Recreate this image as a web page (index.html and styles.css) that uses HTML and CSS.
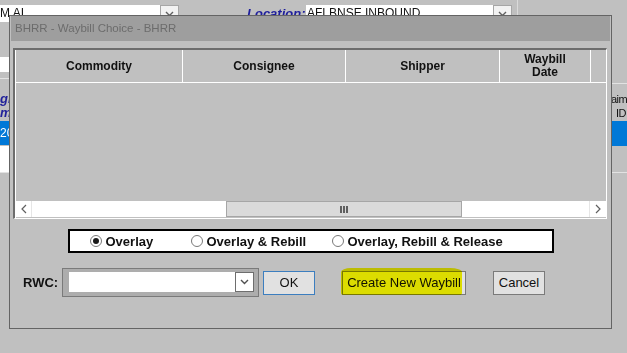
FILE: index.html
```html
<!DOCTYPE html>
<html lang="en">
<head>
    <meta charset="UTF-8">
    <title>Waybill Choice</title>
    <link rel="stylesheet" href="styles.css">
</head>
<body>
<div class="topbar">
    <div class="field field-cust">M AI</div>
    <div class="drop"><svg width="9" height="6" viewBox="0 0 9 6"><path d="M1 1l3.5 3.5L8 1" fill="none" stroke="#606060" stroke-width="1.4"/></svg></div>
    <div class="loc-label">Location:</div>
    <div class="field field-loc">AFLBNSE INBOUND</div>
    <div class="drop"><svg width="9" height="6" viewBox="0 0 9 6"><path d="M1 1l3.5 3.5L8 1" fill="none" stroke="#606060" stroke-width="1.4"/></svg></div>
    <div class="topbar-edge"></div>
</div>
<div class="sides">
    <div class="side side-left">
        <div class="side-input"></div>
        <div class="side-line first"></div>
        <div class="side-label">gnee<br>mit</div>
        <div class="side-row sel">20</div>
        <div class="side-row blank"></div>
        <div class="side-line"></div>
    </div>
    <div class="side side-right">
        <div class="side-line"></div>
        <div class="side-text"><span class="t1">aim</span><span class="t2">ID</span></div>
        <div class="side-row sel"></div>
        <div class="side-line last"></div>
    </div>
</div>

<div class="dialog">
    <div class="title">BHRR - Waybill Choice - BHRR</div>
    <div class="grid">
        <div class="grid-inner">
            <div class="grid-head">
                <div class="col c1">Commodity</div>
                <div class="col c2">Consignee</div>
                <div class="col c3">Shipper</div>
                <div class="col c4">Waybill<br>Date</div>
                <div class="col c5"></div>
            </div>
            <div class="grid-body"></div>
            <div class="hscroll">
                <div class="arrow arrow-l"><svg width="6" height="10" viewBox="0 0 6 10"><path d="M5 1L1 5l4 4" fill="none" stroke="#606060" stroke-width="1.2"/></svg></div>
                <div class="track track-l"></div>
                <div class="thumb"><span></span><span></span><span></span></div>
                <div class="track"></div>
                <div class="arrow arrow-r"><svg width="6" height="10" viewBox="0 0 6 10"><path d="M1 1l4 4-4 4" fill="none" stroke="#606060" stroke-width="1.2"/></svg></div>
            </div>
        </div>
    </div>
    <div class="choice">
        <label class="opt o1"><span class="radio on"></span>Overlay</label>
        <label class="opt o2"><span class="radio"></span>Overlay &amp; Rebill</label>
        <label class="opt o3"><span class="radio"></span>Overlay, Rebill &amp; Release</label>
    </div>
    <div class="actions">
        <span class="rwc">RWC:</span>
        <div class="combo">
            <div class="combo-input"></div>
            <div class="combo-btn"><svg width="9" height="6" viewBox="0 0 9 6"><path d="M1 1l3.5 3.5L8 1" fill="none" stroke="#505050" stroke-width="1.4"/></svg></div>
        </div>
        <button class="btn btn-ok">OK</button>
        <button class="btn btn-new">Create New Waybill</button>
        <button class="btn btn-cancel">Cancel</button>
    </div>
</div>
</body>
</html>
```

FILE: styles.css
```css
*{
    margin: 0;
    padding: 0;
}
body{
    width: 627px;
    height: 353px;
    overflow: hidden;
    background-color: #c0c0c0;
    font-family: "Liberation Sans", Arial, sans-serif;
    color: #111;
}
/* page behind the dialog */
.topbar{
    display: flex;
    align-items: flex-start;
    height: 17px;
    padding-top: 5px;
}
.field{
    height: 17px;
    background-color: #fff;
    font-size: 12px;
    line-height: 17px;
    white-space: nowrap;
    overflow: hidden;
}
.field-cust{
    width: 160px;
}
.field-loc{
    width: 186px;
    padding-left: 1px;
}
.drop{
    width: 19px;
    height: 17px;
    box-sizing: border-box;
    border: 1px solid #a6a6a6;
    background-color: #f2f2f2;
    display: flex;
    align-items: center;
    justify-content: center;
}
.loc-label{
    width: 59px;
    margin-left: 68px;
    font-size: 13px;
    font-weight: bold;
    font-style: italic;
    line-height: 17px;
    color: #1e1e9c;
}
.topbar-edge{
    width: 1px;
    height: 22px;
    margin-left: 5px;
    margin-top: -5px;
    background-color: #dadada;
}
.sides{
    display: flex;
    justify-content: space-between;
}
.side-left{
    width: 9px;
    padding-top: 35px;
}
.side-right{
    width: 16px;
    padding-top: 61px;
}
.side-input{
    height: 15px;
    background-color: #fff;
}
.side-line{
    height: 1px;
    background-color: #e2e2e2;
}
.side-line.first{
    margin-top: 6px;
}
.side-label{
    margin-top: 13px;
    font-size: 13px;
    font-weight: bold;
    font-style: italic;
    line-height: 14px;
    color: #22229a;
    white-space: nowrap;
}
.side-text{
    margin-top: 8px;
    font-size: 11px;
    line-height: 14px;
    letter-spacing: -0.5px;
    white-space: nowrap;
}
.side-text span{
    display: block;
}
.t1{
    margin-left: 0;
}
.t2{
    margin-left: 5px;
}
.side-row.sel{
    margin-top: 1px;
    height: 24px;
    background-color: #0078d7;
    color: #fff;
    font-size: 12px;
    line-height: 24px;
}
.side-right .side-row.sel{
    height: 25px;
}
.side-row.blank{
    margin-top: 1px;
    height: 26px;
    background-color: #fff;
}
.side-line.last{
    margin-top: 26px;
}
/* dialog */
.dialog{
    position: absolute;
    left: 9px;
    top: 15px;
    width: 603px;
    height: 314px;
    box-sizing: border-box;
    border: 1px solid #646464;
    padding: 0 1px;
    background-color: #c0c0c0;
    display: flex;
    flex-direction: column;
}
.title{
    height: 25px;
    padding-left: 4px;
    background-color: #9e9e9e;
    color: #6c6c6c;
    font-size: 11.5px;
    line-height: 25px;
}
.grid{
    height: 171px;
    margin: 7px 3px 0 2px;
    box-sizing: border-box;
    border-style: solid;
    border-width: 2px 1px 1px 2px;
    border-color: #6d6d6d #fff #fff #6d6d6d;
    display: flex;
}
.grid-inner{
    flex: 1;
    display: flex;
    flex-direction: column;
    border-left: 1px solid #fff;
    padding-bottom: 1px;
}
.grid-head{
    height: 33px;
    box-sizing: border-box;
    border-bottom: 1px solid #fff;
    display: flex;
}
.col{
    box-sizing: border-box;
    border-right: 1px solid #fff;
    display: flex;
    align-items: center;
    justify-content: center;
    text-align: center;
    font-size: 12px;
    font-weight: bold;
    line-height: 13px;
}
.c1{ width: 167px; }
.c2{ width: 163px; }
.c3{ width: 154px; }
.c4{ width: 91px; }
.c5{ flex: 1; border-right: none; }
.grid-body{
    flex: 1;
}
.hscroll{
    height: 16px;
    display: flex;
    background-color: #fff;
}
.arrow{
    width: 16px;
    box-sizing: border-box;
    display: flex;
    align-items: center;
    justify-content: center;
}
.arrow-l{
    border-right: 1px solid #e6e6e6;
}
.arrow-r{
    width: 17px;
    border-left: 1px solid #e6e6e6;
}
.track{
    flex: 1;
}
.track-l{
    flex: none;
    width: 194px;
}
.thumb{
    width: 236px;
    box-sizing: border-box;
    border: 1px solid #a6a6a6;
    background-color: #dadada;
    display: flex;
    align-items: center;
    justify-content: center;
    gap: 1px;
}
.thumb span{
    width: 2px;
    height: 7px;
    background-color: #606060;
}
.choice{
    width: 486px;
    height: 24px;
    margin: 10px auto 0;
    box-sizing: border-box;
    border: 2px solid #000;
    background-color: #fff;
    padding-left: 20px;
    display: flex;
    align-items: center;
}
.opt{
    display: flex;
    align-items: center;
    font-size: 13px;
    font-weight: bold;
    white-space: nowrap;
}
.o1{ width: 101px; }
.o2{ width: 141px; }
.radio{
    width: 12px;
    height: 12px;
    margin-right: 4px;
    box-sizing: border-box;
    border: 1px solid #7a7a7a;
    border-radius: 50%;
    background-color: #fff;
    display: flex;
    align-items: center;
    justify-content: center;
}
.radio.on::after{
    content: "";
    width: 6px;
    height: 6px;
    border-radius: 50%;
    background-color: #1a1a1a;
}
.actions{
    height: 29px;
    margin-top: 15px;
    padding-left: 12px;
    display: flex;
    align-items: center;
}
.rwc{
    width: 39px;
    font-size: 13px;
    font-weight: bold;
}
.combo{
    width: 197px;
    height: 29px;
    box-sizing: border-box;
    border: 1px solid #7a7a7a;
    padding: 3px 4px 4px 6px;
    background-color: #adadad;
    display: flex;
}
.combo-input{
    flex: 1;
    background-color: #fff;
}
.combo-btn{
    width: 19px;
    box-sizing: border-box;
    border: 1px solid #6e6e6e;
    background-color: #fff;
    display: flex;
    align-items: center;
    justify-content: center;
}
.btn{
    height: 24px;
    box-sizing: border-box;
    border: 1px solid #7a7a7a;
    background-color: #e1e1e1;
    font-family: "Liberation Sans", Arial, sans-serif;
    font-size: 13px;
    color: #111;
    position: relative;
}
.btn-ok{
    width: 52px;
    margin-left: 4px;
    border-color: #3c7ebf;
}
.btn-new{
    width: 124px;
    margin-left: 27px;
}
.btn-cancel{
    width: 52px;
    margin-left: 27px;
}
/* highlighter stroke over the new waybill button */
.btn-new::before{
    content: "";
    position: absolute;
    left: -2px;
    top: -4px;
    right: 3px;
    bottom: -1px;
    background-color: #fafa00;
    mix-blend-mode: multiply;
    border-radius: 10px 12px 3px 3px / 4px 4px 2px 2px;
}
```
